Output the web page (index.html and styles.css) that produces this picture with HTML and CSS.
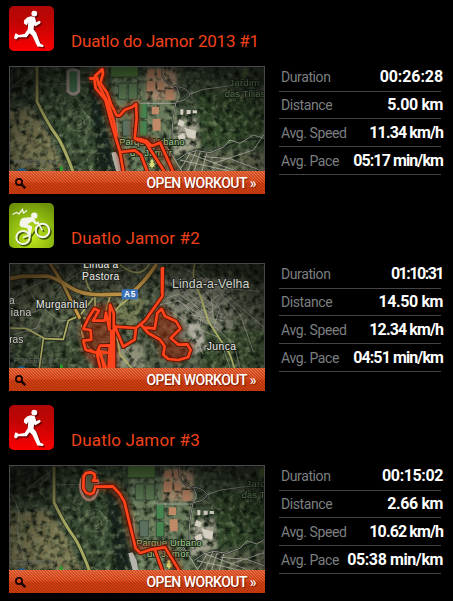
FILE: index.html
```html
<!DOCTYPE html>
<html>

<head>
<meta charset="utf-8">
<title>Duatlo Jamor</title>
<link rel="stylesheet" href="styles.css">
</head>

<body>

	<!--Shapes used more than once-->
	<svg class="defs" width="0" height="0">
		<defs>
			<linearGradient id="red" x1="0" y1="0" x2="0" y2="1">
				<stop offset="0" stop-color="#b00806"/>
				<stop offset="0.35" stop-color="#c00503"/>
				<stop offset="1" stop-color="#fb0000"/>
			</linearGradient>
			<radialGradient id="green" cx="0.5" cy="0.75" r="0.8">
				<stop offset="0" stop-color="#c4ea1c"/>
				<stop offset="0.6" stop-color="#8db80f"/>
				<stop offset="1" stop-color="#6c9108"/>
			</radialGradient>
			<radialGradient id="shade" cx="0.52" cy="0.65" r="0.7">
				<stop offset="0.5" stop-color="#000" stop-opacity="0"/>
				<stop offset="1" stop-color="#000" stop-opacity="0.65"/>
			</radialGradient>
			<filter id="darkNoise" x="0" y="0" width="1" height="1" color-interpolation-filters="sRGB">
				<feTurbulence type="fractalNoise" baseFrequency="0.05" numOctaves="3" seed="4"/>
				<feColorMatrix values="0 0 0 0 0.04  0 0 0 0 0.08  0 0 0 0 0.04  2.4 0 0 0 -1.02"/>
			</filter>
			<filter id="lightNoise" x="0" y="0" width="1" height="1" color-interpolation-filters="sRGB">
				<feTurbulence type="fractalNoise" baseFrequency="0.06" numOctaves="3" seed="9"/>
				<feColorMatrix values="0 0 0 0 0.58  0 0 0 0 0.64  0 0 0 0 0.48  0 2.6 0 0 -1.25"/>
			</filter>
			<filter id="soft"><feGaussianBlur stdDeviation="5"/></filter>
			<filter id="glow" x="-30%" y="-30%" width="160%" height="160%"><feGaussianBlur stdDeviation="7"/></filter>

			<g id="runner">
				<circle cx="25.3" cy="7.6" r="2.9"/>
				<path d="M22 10.3 L25.8 11.2 L27.4 16.3 L30.2 14.8 L31.8 16 L31 17.6 L26.4 20.2 L25 19.3 L24.6 23.5 L27.2 26.7 L31.2 37.6 L34.5 39.2 L34.2 41 L28.4 40.6 L23.3 29.7 L20.6 27.3 L17.6 31.2 L9.3 31.2 L7.2 33.5 L5 32.2 L6.2 27.6 L8 27.8 L9.5 28.9 L15.6 28 L18.8 23.2 L19.2 16.6 L17.7 19.6 L16 18.3 L14.8 17.2 L15.2 14.3 L18.4 11.2 Z"/>
			</g>
			<g id="tree">
				<path d="M0 -18 l8 10 l-4 1 l7 8 l-4 1 l5 6 h-9 v6 h-6 v-6 h-9 l5 -6 l-4 -1 l7 -8 l-4 -1z"/>
			</g>

			<!--Jamor valley-->
			<g id="jamor">
				<rect x="-60" y="0" width="900" height="410" fill="#42503c"/>
				<g filter="url(#soft)">
					<path d="M-30 150 L95 150 L150 230 L200 350 L-30 350z" fill="#7c7853"/>
					<path d="M115 20 H330 L320 350 H220 L130 150z" fill="#3a4d34"/>
					<path d="M262 60 L300 80 L345 350 H300z" fill="#18241c"/>
					<path d="M335 50 H530 V350 H365z" fill="#687a5b"/>
					<path d="M440 25 H530 V120 H440z" fill="#b8977a"/>
					<path d="M530 180 L590 175 L600 260 L520 290z" fill="#a3a18e"/>
					<path d="M590 80 L800 130 V260 L600 260z" fill="#324a2a"/>
					<path d="M560 280 H800 V350 H530z" fill="#626650"/>
					<path d="M-30 20 H90 V130 L-30 110z" fill="#2e382b"/>
				</g>
				<rect x="-60" y="0" width="900" height="410" filter="url(#darkNoise)"/>
				<rect x="-60" y="0" width="900" height="410" filter="url(#lightNoise)" opacity="0.6"/>
				<!--Fields and courts-->
				<path d="M204 34 q16 -10 32 0 v60 q-16 18 -32 0z" fill="#4a7a52" stroke="#a89a92" stroke-width="9"/>
				<g stroke="#2d4030" stroke-width="2">
					<path d="M332 10 h82 v41 h-82z" fill="#55803f"/>
					<path d="M355 70 h26 v48 h-26z M386 70 h26 v48 h-26z" fill="#5c7a52"/>
					<path d="M418 130 h23 v45 h-23z M418 182 h23 v46 h-23z" fill="#468450"/>
					<path d="M368 180 h26 v48 h-26z" fill="#5c7060"/>
				</g>
				<path d="M443 30 h20 v22 h-20z M470 27 h22 v26 h-22z M440 62 h26 v32 h-26z M472 66 h20 v24 h-20z M497 88 h24 v32 h-24z M455 140 h22 v23 h-22z M458 176 h24 v36 h-24z" fill="#c08a68"/>
				<path d="M538 178 l16 8 -5 14 -17 -5z M553 203 l36 10 -4 23 -22 -4z M532 228 l18 -9 7 13 -14 17z M560 150 h12 v12 h-12z M541 148 h9 v16 h-9z M578 151 h13 v9 h-13z" fill="#d4cfc2"/>
				<path d="M334 278 l13 -3 12 25 6 36 h-16z" fill="#b6b5ad"/>
				<!--Streets-->
				<g fill="none" stroke="#202620" stroke-width="5">
					<path d="M487 18 V48 Q500 78 530 80 T570 102 Q570 120 528 126 Q515 190 516 240 L490 270"/>
					<path d="M530 300 L560 280 L590 272 L630 278 L670 262 L720 240 L795 236"/>
				</g>
				<g fill="none" stroke="#b5b4ab" stroke-width="2.4">
					<path d="M487 18 V48 Q500 78 530 80 T570 102 Q568 120 528 126 Q515 190 516 240 L490 270"/>
					<path d="M530 82 Q545 108 530 124 M570 102 L610 88 L700 76"/>
					<path d="M418 130 H525 M350 170 L355 250"/>
					<path d="M530 300 L560 280 L590 272 L630 278 L670 262 L690 240 L720 250 L760 225 L795 236"/>
					<path d="M540 330 L570 280 M560 340 L588 272 M580 340 L600 277 M604 340 L620 280 M540 300 L720 340 M560 278 L700 330 M610 290 L690 296 L780 330 M640 310 L760 270 L795 220 M500 260 L550 340"/>
					<path d="M118 72 H200 M240 66 L268 66 M27 90 Q60 60 118 20" opacity="0.5"/>
					<path d="M-18 100 Q18 150 0 210 L20 290" opacity="0.6"/>
				</g>
				<g fill="none" stroke="#8c9a7c" stroke-width="2.5" opacity="0.5">
					<path d="M205 165 q25 -35 50 -8 t8 45 t-45 8 M218 178 q20 -20 33 0 t-18 28"/>
				</g>
				<path d="M111 18 V125 Q145 195 168 225 T225 352" fill="none" stroke="#272d20" stroke-width="14"/>
				<path d="M111 18 V125 Q145 195 168 225 T225 352" fill="none" stroke="#a5a862" stroke-width="9"/>
				<!--Place names-->
				<g class="park">
					<text x="357" y="256" textLength="197">Parque Urbano</text>
					<text x="390" y="288" textLength="126">do Jamor</text>
					<text x="688" y="79" textLength="90" opacity="0.8">Jardim</text>
					<text x="674" y="111" textLength="122" opacity="0.8">das Tílias</text>
				</g>
				<use href="#tree" x="456" y="313" fill="#d8dc78" stroke="#343c24" stroke-width="2"/>
				<use href="#tree" x="735" y="38" fill="#6a8a4c"/>
			</g>
			<g id="powered">
				<text class="powered" x="41" y="314" textLength="130">POWERED BY</text>
				<path d="M51 337 a15 15 0 0 1 28 0" fill="none" stroke="#1d5a8b" stroke-width="6"/>
				<path d="M184 320 v17" stroke="#22a322" stroke-width="8"/>
			</g>
		</defs>
	</svg>

	<!--Workout 1-->
	<div class="workout">
		<div class="head">
			<svg class="sport" viewBox="0 0 45 45">
				<rect width="45" height="45" rx="5" fill="url(#red)"/>
				<use href="#runner" x="1.5" y="1.5" fill="#500" opacity="0.75"/>
				<use href="#runner" fill="#fff"/>
			</svg>
			<h2 class="long">Duatlo do Jamor 2013 #1</h2>
		</div>
		<div class="body">
			<div class="map">
				<svg viewBox="27 18 768 384">
					<use href="#jamor"/>
					<rect x="27" y="18" width="768" height="384" fill="url(#shade)"/>
					<use href="#powered"/>
					<g class="route">
						<path class="halo" d="M268 55 L287 59 L307 28 L301 68 L350 166 L408 132 L404 235 L440 243 L482 255 L520 336 M287 84 L316 120 L360 275 L372 336"/>
						<path class="edge" d="M268 55 L283 56 L286 47 L307 28 L309 41 L301 69 L321 98 L333 132 L350 166 L359 167 L375 149 L397 141 L408 132 L410 175 L404 235 L423 238 L440 243 L455 258 L480 248 L524 345 M283 56 L287 84 L316 120 L333 185 L346 230 L360 275 L372 345 M362 276 L404 271 L423 285 L446 345 M405 237 L438 248 L500 345"/>
						<path class="line" d="M268 55 L283 56 L286 47 L307 28 L309 41 L301 69 L321 98 L333 132 L350 166 L359 167 L375 149 L397 141 L408 132 L410 175 L404 235 L423 238 L440 243 L455 258 L480 248 L524 345 M283 56 L287 84 L316 120 L333 185 L346 230 L360 275 L372 345 M362 276 L404 271 L423 285 L446 345 M405 237 L438 248 L500 345"/>
						<path class="line" d="M290 50 L296 75 L325 130 L343 190 L350 230"/>
					</g>
				</svg>
				<div class="open">
					<svg class="lens" viewBox="0 0 11 11"><circle cx="4" cy="4" r="3.1" fill="none" stroke="#150400" stroke-width="1.7"/><path d="M6.2 6.2 L10.2 10.2" stroke="#150400" stroke-width="2.4"/></svg>
					<span>OPEN WORKOUT »</span>
				</div>
			</div>
			<div class="stats">
				<div class="row"><span>Duration</span><b class="wide">00:26:28</b></div>
				<div class="row"><span>Distance</span><b>5.00 km</b></div>
				<div class="row"><span>Avg. Speed</span><b class="tight">11.34 km/h</b></div>
				<div class="row"><span>Avg. Pace</span><b class="tight">05:17 min/km</b></div>
			</div>
		</div>
	</div>

	<!--Workout 2-->
	<div class="workout">
		<div class="head">
			<svg class="sport" viewBox="0 0 45 45">
				<rect width="45" height="45" rx="5" fill="url(#green)"/>
				<g fill="none" stroke="#2e4200" opacity="0.85" transform="translate(1.4 1.4)">
					<circle cx="14" cy="34.5" r="6.6" stroke-width="2"/>
					<circle cx="33.5" cy="27.5" r="6.8" stroke-width="2"/>
					<path d="M14 34.5 L21 32 L19 25 M21 32 L29 21 L33.5 27.5 M29 21 L28 18" stroke-width="1.6"/>
				</g>
				<g fill="none" stroke="#f3f5ea">
					<circle cx="14" cy="34.5" r="6.6" stroke-width="2"/>
					<circle cx="33.5" cy="27.5" r="6.8" stroke-width="2"/>
					<path d="M14 34.5 L21 32 L19 25 M29 20 L33.5 27.5" stroke-width="1.5"/>
					<path d="M3.5 11.5 L7.5 9.5 L10 11 L13.5 6.5 L14.5 10 L18 7.5" stroke-width="1.3"/>
				</g>
				<circle cx="25.3" cy="12.6" r="3.2" fill="#f3f5ea"/>
				<path d="M23 14 L13.5 15 Q10.5 17 10.5 22 L12 24 L19.5 25.3 L18.5 33 L21.3 33.4 L23.3 23.5 L18.5 21.3 L23.3 18.5 L26.5 21.5 L30.5 20.5 L29.8 18.6 L27.2 19 L25.5 16z" fill="#f3f5ea"/>
			</svg>
			<h2>Duatlo Jamor #2</h2>
		</div>
		<div class="body">
			<div class="map">
				<svg viewBox="27 15 768 384">
					<rect x="27" y="15" width="768" height="384" fill="#535a47"/>
					<g filter="url(#soft)">
						<path d="M27 80 H200 V190 H27z" fill="#5f694f"/>
						<path d="M480 60 H700 V240 H520z" fill="#77786b"/>
						<path d="M610 220 H795 V340 H600z" fill="#3d5032"/>
						<path d="M340 130 L440 120 L400 220 H340z" fill="#70764f"/>
						<path d="M40 240 H240 L270 340 H40z" fill="#3c4c36"/>
						<path d="M350 260 H430 V330 H350z" fill="#8d8d78"/>
						<path d="M560 190 L600 200 L620 270 L580 290z" fill="#b0ada0"/>
						<path d="M580 15 H795 V60 H580z" fill="#3f4836"/>
					</g>
					<rect x="27" y="15" width="768" height="384" filter="url(#darkNoise)"/>
					<rect x="27" y="15" width="768" height="384" filter="url(#lightNoise)" opacity="0.6"/>
					<!--Small streets-->
					<g fill="none" stroke="#b4b3a4" stroke-width="2.2" opacity="0.75">
						<path d="M480 140 L540 128 L590 180 L650 210 L700 260 M500 120 L560 100 L620 60 L700 130 L795 210 M540 90 L600 160 L690 100 M580 60 L660 150 L640 210 M600 40 L720 170 M560 140 L660 80 M570 170 L680 190 M610 110 L600 200 L570 260 M630 80 L640 180 M500 150 L570 200 L610 290 M660 60 L640 100 M550 30 L660 90 L780 100 M590 210 L660 240 L690 330"/>
						<path d="M520 120 L600 170 M540 110 L620 165 M560 105 L640 160 M575 95 L655 150 M600 190 L670 130 M585 175 L655 110"/>
						<path d="M30 130 Q90 80 160 60 M60 180 L130 150 L180 190 L240 180 M40 230 L110 210 L130 170 M260 30 L200 70 L150 120 M300 20 Q330 60 420 20 M230 120 L300 50 M90 100 L120 150"/>
						<path d="M350 230 L400 300 L440 330 M345 160 L380 110 M700 250 L720 330 M720 170 L760 280"/>
					</g>
					<!--Roads-->
					<g fill="none" stroke="#2a2c1e" stroke-width="11">
						<path d="M240 160 L262 250 L300 300"/>
						<path d="M130 242 L190 244 L205 188 L240 172 M130 242 L118 330"/>
					</g>
					<g fill="none" stroke="#b0b066" stroke-width="5">
						<path d="M27 210 L80 212 L135 242 L190 244 L205 188 L240 172 L280 120 M130 242 L118 330"/>
						<path d="M285 110 L285 190 M330 115 L310 190 L250 180"/>
						<path d="M245 200 Q240 250 290 300 L300 335 M345 200 L360 290 L395 330"/>
						<path d="M270 18 Q240 60 280 110 M400 112 Q330 160 330 190"/>
						<path d="M585 15 Q570 60 600 110 L625 190 L690 290 L705 335"/>
						<path d="M360 20 Q420 70 450 15"/>
					</g>
					<path d="M27 62 L65 55 L140 54 Q170 60 208 86 T310 110 L380 108 Q410 105 470 18 M150 16 L190 80 L240 182" fill="none" stroke="#40351c" stroke-width="16"/>
					<path d="M27 62 L65 55 L140 54 Q170 60 208 86 T310 110 L380 108 Q410 105 470 18" fill="none" stroke="#d6a54e" stroke-width="11"/>
					<path d="M150 16 L190 80 L240 182" fill="none" stroke="#cc9c48" stroke-width="9"/>
					<rect x="27" y="15" width="768" height="384" fill="url(#shade)"/>
					<use href="#powered"/>
					<g class="route">
						<path class="shadow" d="M485 153 L540 212 L510 246 L572 265 L535 306 L490 290 L488 255 L435 207z"/>
						<path class="shadow" d="M283 152 L335 145 L345 330 H300 L255 275 L250 215z"/>
						<path class="edge" d="M488 27 L487 115 L435 188 L408 210 L345 206 M408 210 L404 245 L370 266 L345 206 M430 208 L464 212 L472 165 L485 153 L495 175 L528 190 L541 212 L512 240 L535 260 L562 259 L572 276 L564 298 L535 306 L505 303 L490 290 L494 265 L480 245 L445 225 L430 208 L420 196"/>
						<path class="edge" d="M342 330 L341 165 L330 140 L328 215 L318 164 L314 188 L279 188 L297 158 L283 152 L265 181 L250 213 L272 216 L274 245 L250 248 L257 275 L290 285 L300 263 L329 262 L326 330 M290 284 L301 330"/>
						<path class="line" d="M488 27 L487 115 L435 188 L408 210 L345 206 M408 210 L404 245 L370 266 L345 206 M430 208 L464 212 L472 165 L485 153 L495 175 L528 190 L541 212 L512 240 L535 260 L562 259 L572 276 L564 298 L535 306 L505 303 L490 290 L494 265 L480 245 L445 225 L430 208 L420 196"/>
						<path class="line" d="M342 330 L341 165 L330 140 L328 215 L318 164 L314 188 L279 188 L297 158 L283 152 L265 181 L250 213 L272 216 L274 245 L250 248 L257 275 L290 285 L300 263 L329 262 L326 330 M290 284 L301 330 M268 275 L300 290 L318 330 M334 215 V330 M300 275 L312 330 M290 280 L328 285"/>
						<path class="line" d="M486 30 V105"/>
					</g>
					<g class="place">
						<text x="250" y="31" textLength="105">Linda a</text>
						<text x="246" y="66" textLength="112">Pastora</text>
						<text x="516" y="91" textLength="232" class="big">Linda-a-Velha</text>
						<text x="108" y="151" textLength="154">Murganhal</text>
						<text x="620" y="275" textLength="88">Junca</text>
						<text x="27" y="138" opacity="0.7">a</text>
						<text x="32" y="174" textLength="62" opacity="0.8">iana</text>
						<text x="28" y="255" textLength="42" opacity="0.8">ras</text>
					</g>
					<rect x="365" y="94" width="49" height="30" rx="3" fill="#3a70b8"/>
					<text class="motorway" x="372" y="118" textLength="34">A5</text>
				</svg>
				<div class="open">
					<svg class="lens" viewBox="0 0 11 11"><circle cx="4" cy="4" r="3.1" fill="none" stroke="#150400" stroke-width="1.7"/><path d="M6.2 6.2 L10.2 10.2" stroke="#150400" stroke-width="2.4"/></svg>
					<span>OPEN WORKOUT »</span>
				</div>
			</div>
			<div class="stats">
				<div class="row"><span>Duration</span><b class="ones">01:10:31</b></div>
				<div class="row"><span>Distance</span><b>14.50 km</b></div>
				<div class="row"><span>Avg. Speed</span><b class="tight">12.34 km/h</b></div>
				<div class="row"><span>Avg. Pace</span><b class="tight">04:51 min/km</b></div>
			</div>
		</div>
	</div>

	<!--Workout 3-->
	<div class="workout last">
		<div class="head">
			<svg class="sport" viewBox="0 0 45 45">
				<rect width="45" height="45" rx="5" fill="url(#red)"/>
				<use href="#runner" x="1.5" y="1.5" fill="#500" opacity="0.75"/>
				<use href="#runner" fill="#fff"/>
			</svg>
			<h2>Duatlo Jamor #3</h2>
		</div>
		<div class="body">
			<div class="map">
				<svg viewBox="27 15 768 384">
					<use href="#jamor" x="51" y="2"/>
					<rect x="27" y="15" width="768" height="384" fill="url(#shade)"/>
					<use href="#powered"/>
					<g class="route">
						<ellipse cx="268" cy="78" rx="27" ry="42" fill="#b8625050" stroke="#c9877a" stroke-width="8" opacity="0.7"/>
						<path class="halo" d="M285 80 L338 78 L372 125 L407 265 L495 262 L540 335"/>
						<path class="edge" d="M294 62 L279 62 L285 52 L283 42 L272 37 L258 39 L251 49 L250 85 L258 98 L270 103 L281 98 L286 80 L338 79 L359 101 L373 125 L407 265 L421 279 L455 268 L495 262 L543 340 M465 270 L490 340"/>
						<path class="line" d="M294 62 L279 62 L285 52 L283 42 L272 37 L258 39 L251 49 L250 85 L258 98 L270 103 L281 98 L286 80 L338 79 L359 101 L373 125 L407 265 L421 279 L455 268 L495 262 L543 340 M465 270 L490 340"/>
					</g>
				</svg>
				<div class="open">
					<svg class="lens" viewBox="0 0 11 11"><circle cx="4" cy="4" r="3.1" fill="none" stroke="#150400" stroke-width="1.7"/><path d="M6.2 6.2 L10.2 10.2" stroke="#150400" stroke-width="2.4"/></svg>
					<span>OPEN WORKOUT »</span>
				</div>
			</div>
			<div class="stats">
				<div class="row"><span>Duration</span><b>00:15:02</b></div>
				<div class="row"><span>Distance</span><b>2.66 km</b></div>
				<div class="row"><span>Avg. Speed</span><b class="tight">10.62 km/h</b></div>
				<div class="row"><span>Avg. Pace</span><b>05:38 min/km</b></div>
			</div>
		</div>
	</div>

</body>
</html>
```
FILE: styles.css
```css
body {
    margin: 0;
    padding: 6px 9px 0 9px;
    background-color: #000;
    font-family: Roboto, "Liberation Sans", sans-serif;
}
.defs {
    display: block;
}
.workout {
    margin-bottom: 9px;
}
.workout.last {
    margin-top: 14px;
    margin-bottom: 0;
}

/* Icon and title */
.head {
    display: flex;
    height: 45px;
    margin-bottom: 15px;
}
.sport {
    width: 45px;
    height: 45px;
}
.head h2 {
    margin: 25px 0 0 17px;
    font-size: 17px;
    line-height: 20px;
    font-weight: 400;
    letter-spacing: 0.15px;
    color: #f0421a;
    white-space: nowrap;
}
.head .long {
    letter-spacing: -0.2px;
}

/* Map with the button over its lower edge */
.body {
    display: flex;
}
.map {
    position: relative;
    width: 256px;
    height: 128px;
    overflow: hidden;
}
.map > svg {
    display: block;
    width: 256px;
    height: 128px;
}
.map::after {
    content: "";
    position: absolute;
    top: 0;
    left: 0;
    right: 0;
    height: 104px;
    border: 1px solid #48484a;
    border-bottom: none;
}
.open {
    position: absolute;
    z-index: 1;
    left: 0;
    right: 0;
    bottom: 0;
    height: 23px;
    display: flex;
    align-items: center;
    justify-content: space-between;
    padding: 0 9px 0 6px;
    box-sizing: border-box;
    background: repeating-linear-gradient(45deg, rgba(90, 20, 0, 0.3) 0, rgba(90, 20, 0, 0.3) 1px, transparent 1px, transparent 2.12px), linear-gradient(#ff7445, #f2592a 45%, #de4414 55%, #d84010);
    color: #fff;
    font-size: 14px;
    line-height: 23px;
    font-weight: 500;
    letter-spacing: -0.5px;
    text-shadow: 1px 1px 1px #7a2008;
}
.open span {
    margin-top: 2px;
}
.lens {
    width: 11px;
    height: 11px;
    margin-top: 2px;
}

/* Numbers */
.stats {
    width: 162px;
    margin-left: 14px;
}
.row {
    display: flex;
    justify-content: space-between;
    align-items: flex-end;
    box-sizing: border-box;
    height: 28px;
    padding: 0 0 5px 2px;
    margin-right: -2px;
    white-space: nowrap;
    background: linear-gradient(#444, #444) left bottom / 162px 1px no-repeat;
}
.row:first-child {
    height: 26px;
    padding-bottom: 6px;
}
.row:nth-child(2) {
    height: 27px;
}
.row span {
    font-size: 14px;
    line-height: 18px;
    color: #7c7f80;
    letter-spacing: -0.4px;
}
.row b {
    font-size: 16px;
    line-height: 18px;
    font-weight: 700;
    color: #fff;
    letter-spacing: -0.4px;
}
.row .wide {
    letter-spacing: -0.1px;
}
.row .tight {
    letter-spacing: -0.9px;
}
.row .ones {
    letter-spacing: -1.5px;
}

/* Map drawing */
.route path {
    fill: none;
    stroke-linejoin: round;
}
.route .halo {
    stroke: #a02808;
    stroke-width: 26;
    opacity: 0.5;
    filter: url(#glow);
}
.route .shadow {
    fill: #a02c0c;
    stroke: #a02808;
    stroke-width: 20;
    opacity: 0.5;
    filter: url(#glow);
}
.route .edge {
    stroke: #5c1606;
    stroke-width: 14;
}
.route .line {
    stroke: #ff431a;
    stroke-width: 8;
}
.park text, .place text {
    font-family: "Liberation Sans", sans-serif;
    font-size: 31px;
    paint-order: stroke;
    stroke: #1d2a1b;
    stroke-width: 6px;
    fill: #a8d092;
}
.park text {
    font-size: 29px;
}
.place text {
    fill: #eeeee8;
    stroke: #20241d;
}
.place .big {
    font-size: 37px;
    fill: #cfcfc9;
}
.motorway {
    font-family: "Liberation Sans", sans-serif;
    font-size: 25px;
    font-weight: 700;
    fill: #fff;
}
.powered {
    font-family: "Liberation Sans", sans-serif;
    font-size: 19px;
    fill: #696d66;
}
```
